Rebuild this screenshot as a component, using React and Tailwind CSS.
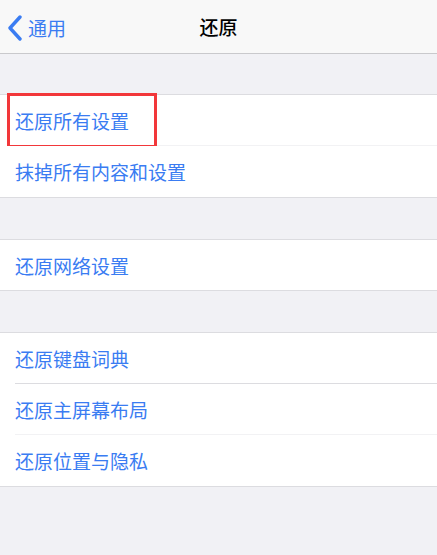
const font = { fontFamily: '"Noto Sans CJK SC", "Noto Sans", sans-serif' };

function Row({ label, last, faint, highlight, short }) {
  return (
    <div className={`relative bg-white pl-[15px] ${short ? 'h-[50px]' : 'h-[51px]'}`}>
      <div
        className={`h-full flex items-center ${
          last ? '' : faint ? 'border-b border-[#f2f2f4]' : 'border-b border-[#dcdce0]'
        }`}
      >
        <span className="text-[19px] leading-none text-[#3a7cf2]">{label}</span>
      </div>
      {highlight && (
        <div className="absolute left-[7px] top-[-2px] w-[150px] h-[55px] border-[3px] border-[#f2373a]" />
      )}
    </div>
  );
}

function Group({ children }) {
  return <div className="border-y border-[#dcdce0] bg-white">{children}</div>;
}

export default function App() {
  return (
    <div className="w-[437px] h-[555px] bg-[#f1f1f5] flex flex-col overflow-hidden" style={font}>
      {/* Nav bar */}
      <div className="relative h-[54px] bg-[#f8f8f8] border-b border-[#c9c9cc] flex items-center justify-center">
        <div className="absolute left-[7px] top-0 h-[53px] flex items-center gap-[5px]">
          <svg width="16" height="26" viewBox="0 0 16 26" className="mt-[2px]">
            <path d="M13 2 L3 13 L13 24" fill="none" stroke="#3a7cf2" strokeWidth="3.4" strokeLinecap="round" strokeLinejoin="round" />
          </svg>
          <span className="text-[19px] leading-none text-[#3a7cf2] mt-[1px]">通用</span>
        </div>
        <span className="text-[19px] leading-none font-medium text-black">还原</span>
      </div>

      <div className="h-[40px]" />
      <Group>
        <Row label="还原所有设置" faint highlight />
        <Row label="抹掉所有内容和设置" last />
      </Group>

      <div className="h-[41px]" />
      <Group>
        <Row label="还原网络设置" last short />
      </Group>

      <div className="h-[41px]" />
      <Group>
        <Row label="还原键盘词典" />
        <Row label="还原主屏幕布局" faint />
        <Row label="还原位置与隐私" last />
      </Group>
    </div>
  );
}
